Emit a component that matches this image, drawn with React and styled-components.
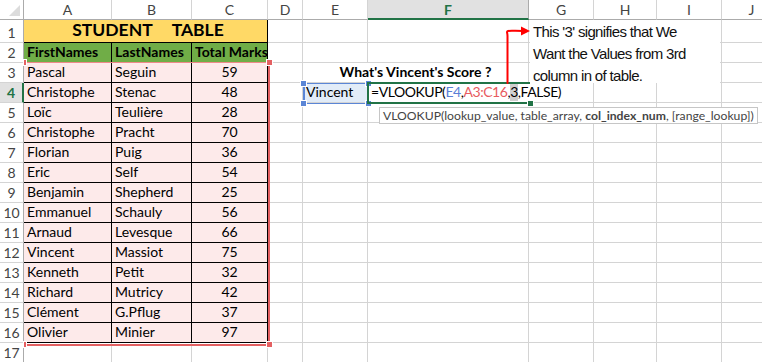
import React from 'react';
import styled, { createGlobalStyle, css } from 'styled-components';

const GlobalStyle = createGlobalStyle`
  html, body {
    margin: 0;
    padding: 0;
    background: #ffffff;
    overflow: hidden;
  }
  body {
    font-family: Lato, "Liberation Sans", sans-serif;
  }
`;

const COLS = [
  { key: 'A', w: 88 },
  { key: 'B', w: 80 },
  { key: 'C', w: 76 },
  { key: 'D', w: 35 },
  { key: 'E', w: 65 },
  { key: 'F', w: 161 },
  { key: 'G', w: 65 },
  { key: 'H', w: 63 },
  { key: 'I', w: 65 },
  { key: 'J', w: 60 },
];

const STUDENTS = [
  ['Pascal', 'Seguin', 59],
  ['Christophe', 'Stenac', 48],
  ['Loïc', 'Teulière', 28],
  ['Christophe', 'Pracht', 70],
  ['Florian', 'Puig', 36],
  ['Eric', 'Self', 54],
  ['Benjamin', 'Shepherd', 25],
  ['Emmanuel', 'Schauly', 56],
  ['Arnaud', 'Levesque', 66],
  ['Vincent', 'Massiot', 75],
  ['Kenneth', 'Petit', 32],
  ['Richard', 'Mutricy', 42],
  ['Clément', 'G.Pflug', 37],
  ['Olivier', 'Minier', 97],
];

const GRID = '#d4d4d4';
const HEAD_LINE = '#ababab';
const XL_GREEN = '#217346';

const Sheet = styled.div`
  position: relative;
  display: grid;
  grid-template-columns: 24px ${COLS.map(c => `${c.w}px`).join(' ')};
  grid-template-rows: 20px 23px repeat(16, 20px);
  width: 782px;
  font-family: Lato, "Liberation Sans", sans-serif;
  color: #000;
`;

const Corner = styled.div`
  border-right: 1px solid ${HEAD_LINE};
  border-bottom: 1px solid ${HEAD_LINE};
  box-sizing: border-box;
  display: flex;
  align-items: flex-end;
  justify-content: flex-end;
  padding: 0 3px 3px 0;
`;

const ColHeader = styled.div`
  box-sizing: border-box;
  display: flex;
  align-items: center;
  justify-content: center;
  font-size: 14px;
  color: #444;
  border-right: 1px solid ${GRID};
  border-bottom: 1px solid ${HEAD_LINE};
  ${p => p.$active && css`
    background: #e1e1e1;
    color: ${XL_GREEN};
    font-weight: 700;
    border-bottom: 2px solid ${XL_GREEN};
    border-right-color: ${HEAD_LINE};
  `}
`;

const RowHeader = styled.div`
  box-sizing: border-box;
  display: flex;
  align-items: flex-end;
  justify-content: center;
  padding-bottom: 1px;
  font-size: 14px;
  color: #444;
  border-right: 1px solid ${HEAD_LINE};
  border-bottom: 1px solid ${GRID};
  ${p => p.$active && css`
    background: #e1e1e1;
    color: ${XL_GREEN};
    font-weight: 700;
    border-right: 2px solid ${XL_GREEN};
  `}
`;

const Cell = styled.div`
  box-sizing: border-box;
  display: flex;
  align-items: flex-end;
  justify-content: ${p => p.$align || 'flex-start'};
  padding: 0 3px 1px;
  font-size: 14px;
  line-height: 18px;
  white-space: nowrap;
  background: ${p => p.$fill || '#fff'};
  font-weight: ${p => (p.$bold ? 700 : 400)};
  grid-column: ${p => (p.$span ? `span ${p.$span}` : 'auto')};
  border-right: 1px solid ${p => (p.$ruled ? '#000' : GRID)};
  border-bottom: 1px solid ${p => (p.$ruled ? '#000' : GRID)};
`;

const Title = styled(Cell)`
  gap: 19px;
  font-size: 17.5px;
  line-height: 22px;
  padding-left: 8px;
`;

const RefCell = styled(Cell)`
  background: #e2ecf8;
`;

const FormulaCell = styled(Cell)`
  position: relative;
  z-index: 2;
  overflow: visible;
  border-right: none;
  letter-spacing: -0.45px;
  padding-left: 3px;
`;

const Ref = styled.span`
  color: ${p => p.$color};
`;

const ArgMark = styled.span`
  align-self: stretch;
  display: flex;
  align-items: flex-end;
  background: #cfcfcf;
  margin-top: 1px;
`;

const EditFrame = styled.div`
  position: absolute;
  left: 367px;
  top: 82px;
  width: 163px;
  height: 22px;
  box-sizing: border-box;
  border-top: 2px solid ${XL_GREEN};
  border-bottom: 2px solid ${XL_GREEN};
  border-left: 2px solid ${XL_GREEN};
  pointer-events: none;
  z-index: 3;
`;

const RangeFrame = styled.div`
  position: absolute;
  left: 24px;
  top: 62px;
  width: 246px;
  height: 284px;
  box-sizing: border-box;
  border-top: 1px solid #ee8a8a;
  border-right: 2px solid #e46062;
  border-bottom: 2px solid #e46062;
  pointer-events: none;
  z-index: 3;
`;

const RefFrame = styled.div`
  position: absolute;
  left: 303px;
  top: 83px;
  width: 66px;
  height: 21px;
  box-sizing: border-box;
  border: 1px solid #5b86d6;
  border-left-width: 2px;
  border-right-width: 2px;
  pointer-events: none;
  z-index: 3;
`;

const Handle = styled.span`
  position: absolute;
  width: ${p => (p.$thin ? 2 : 5)}px;
  height: 5px;
  background: ${p => p.$color};
  outline: 1px solid #fff;
  ${p => (p.$top ? 'top' : 'bottom')}: -3px;
  ${p => (p.$left ? `left: ${p.$thin ? 0 : -4}px;` : 'right: -4px;')}
`;

const EditHandle = styled.span`
  position: absolute;
  right: -3px;
  bottom: -4px;
  width: 5px;
  height: 5px;
  background: ${XL_GREEN};
  outline: 1px solid #fff;
`;

const Tooltip = styled.div`
  position: absolute;
  left: 379px;
  top: 107px;
  height: 17px;
  box-sizing: border-box;
  padding: 0 3px;
  display: flex;
  align-items: center;
  background: #fff;
  border: 1px solid #c6c6c6;
  font-size: 12.2px;
  color: #444;
  white-space: pre;
  z-index: 4;
  b {
    font-weight: 700;
  }
`;

const Note = styled.div`
  position: absolute;
  left: 530px;
  top: 20px;
  width: 190px;
  height: 63px;
  padding: 1px 0 0 3px;
  box-sizing: border-box;
  background: #fff;
  font-family: "Liberation Sans", sans-serif;
  font-size: 15px;
  letter-spacing: -0.65px;
  line-height: 22px;
  color: #111;
  z-index: 4;
`;

const Arrow = styled.svg`
  position: absolute;
  left: 495px;
  top: 20px;
  z-index: 5;
  overflow: visible;
`;

const colLetter = i => COLS[i].key;

function EmptyCells({ from, to }) {
  const cells = [];
  for (let i = from; i <= to; i++) {
    cells.push(<Cell key={colLetter(i)} />);
  }
  return cells;
}

export default function App() {
  return (
    <>
      <GlobalStyle />
      <Sheet>
        {/* column headers */}
        <Corner>
          <svg width="11" height="11" viewBox="0 0 11 11">
            <polygon points="11,0 11,11 0,11" fill="#dcdcdc" />
          </svg>
        </Corner>
        {COLS.map(c => (
          <ColHeader key={c.key} $active={c.key === 'F'}>{c.key}</ColHeader>
        ))}

        {/* row 1 */}
        <RowHeader>1</RowHeader>
        <Title $span={3} $fill="#ffd966" $bold $ruled $align="center">
          <span>STUDENT</span>
          <span>TABLE</span>
        </Title>
        <EmptyCells from={3} to={9} />

        {/* row 2 */}
        <RowHeader>2</RowHeader>
        <Cell $fill="#70ad47" $bold $ruled>FirstNames</Cell>
        <Cell $fill="#70ad47" $bold $ruled>LastNames</Cell>
        <Cell $fill="#70ad47" $bold $ruled>Total Marks</Cell>
        <EmptyCells from={3} to={9} />

        {STUDENTS.map(([first, last, marks], i) => {
          const row = i + 3;
          return (
            <React.Fragment key={row}>
              <RowHeader $active={row === 4}>{row}</RowHeader>
              <Cell $fill="#fdeaea" $ruled>{first}</Cell>
              <Cell $fill="#fdeaea" $ruled>{last}</Cell>
              <Cell $fill="#fdeaea" $ruled $align="center">{marks}</Cell>
              <Cell />
              {row === 3 && (
                <Cell $span={2} $bold $align="center">What's Vincent's Score ?</Cell>
              )}
              {row === 4 && (
                <>
                  <RefCell>Vincent</RefCell>
                  <FormulaCell>
                    =VLOOKUP(<Ref $color="#5b7fd6">E4</Ref>,<Ref $color="#e85b60">A3:C16</Ref>,<ArgMark>3</ArgMark>,FALSE)
                  </FormulaCell>
                </>
              )}
              {row > 4 && <EmptyCells from={4} to={5} />}
              <EmptyCells from={6} to={9} />
            </React.Fragment>
          );
        })}

        {/* row 17 */}
        <RowHeader>17</RowHeader>
        <EmptyCells from={0} to={9} />

        {/* overlays */}
        <RangeFrame>
          <Handle $color="#e46062" $top $left $thin />
          <Handle $color="#e46062" $top />
          <Handle $color="#e46062" $left $thin />
          <Handle $color="#e46062" />
        </RangeFrame>

        <RefFrame>
          <Handle $color="#5b86d6" $top $left />
          <Handle $color="#5b86d6" $top />
          <Handle $color="#5b86d6" $left />
          <Handle $color="#5b86d6" />
        </RefFrame>

        <EditFrame>
          <EditHandle />
        </EditFrame>

        <Tooltip>
          VLOOKUP(lookup_value, table_array, <b>col_index_num</b>, [range_lookup])
        </Tooltip>

        <Note>
          This '3' signifies that We<br />
          Want the Values from 3rd<br />
          column in of table.
        </Note>

        <Arrow width="40" height="66" viewBox="0 0 40 66">
          <path
            d="M12.5 63 L12.5 16 C12.5 12 11 11.5 13 11 C16 10.5 20 11 28 11"
            fill="none"
            stroke="#ff0000"
            strokeWidth="2"
            strokeLinecap="round"
          />
          <polygon points="26,6.5 35,11 26,15.5" fill="#ff0000" />
        </Arrow>
      </Sheet>
    </>
  );
}
